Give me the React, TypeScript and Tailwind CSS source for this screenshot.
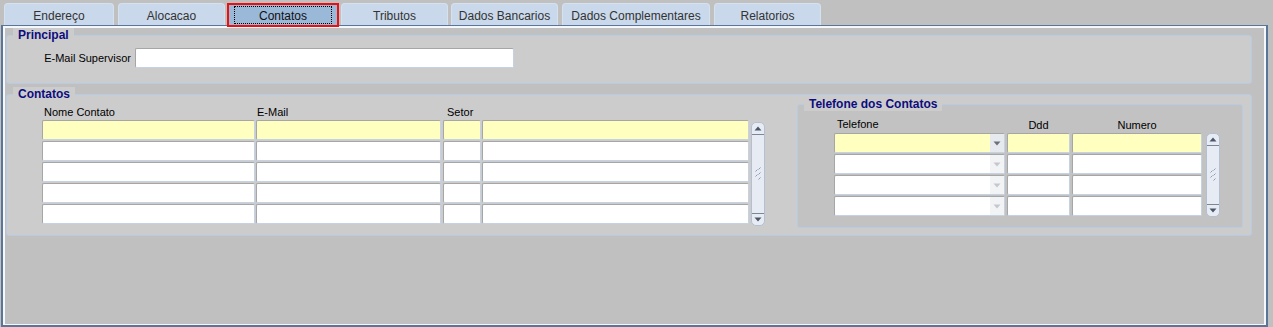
import { ReactNode } from 'react'
import { clsx } from 'clsx'

// ── Tabs ──────────────────────────────────────────────────────────────────────
const TABS = [
  { label: 'Endereço', cls: 'ml-[3px] w-[110px]' },
  { label: 'Alocacao', cls: 'ml-[4px] w-[107px]' },
  { label: 'Contatos', cls: 'ml-[2px] w-[112px]', active: true },
  { label: 'Tributos', cls: 'ml-[2px] w-[107px]' },
  { label: 'Dados Bancarios', cls: 'ml-[3px] w-[107px]' },
  { label: 'Dados Complementares', cls: 'ml-[4px] w-[148px]' },
  { label: 'Relatorios', cls: 'ml-[4px] w-[107px]' },
]

function Tab({ label, cls, active }: { label: string; cls: string; active?: boolean }) {
  if (active)
    return (
      <div className={clsx('relative z-10 h-[24px] border-2 border-[#ee0e0e] bg-[#9ab8d8] px-[5px] py-[1px] flex', cls)}>
        <div className="flex-1 border border-dotted border-black flex items-center justify-center pt-[1px] text-[12px] text-[#111]">
          {label}
        </div>
      </div>
    )
  return (
    <div className={clsx('h-[22px] rounded-t-[4px] border border-b-0 border-[#d6e1ee] bg-[#c9d8ea] flex items-center justify-center pt-[3px] text-[12px] text-[#333]', cls)}>
      {label}
    </div>
  )
}

// ── Group box ─────────────────────────────────────────────────────────────────
function GroupBox({ title, className, children }: { title: string; className?: string; children: ReactNode }) {
  return (
    <div className={clsx('relative rounded-[3px] border border-[#b7cce4]', className)}>
      <span className="absolute -top-[8px] left-[6px] h-[14px] px-[5px] bg-[#cccccc] text-[12px] leading-[14px] font-bold text-[#0c0c7e]">
        {title}
      </span>
      {children}
    </div>
  )
}

// ── Inputs ────────────────────────────────────────────────────────────────────
function Field({ cls, yellow, children }: { cls: string; yellow?: boolean; children?: ReactNode }) {
  return (
    <div
      className={clsx(
        'h-[20px] rounded-[2px] border border-[#a6a6a6] border-r-[#c4d2e4] border-b-[#c4d2e4] flex justify-end overflow-hidden',
        yellow ? 'bg-[#ffffc0]' : 'bg-white',
        cls
      )}
    >
      {children}
    </div>
  )
}

function DropArrow({ enabled }: { enabled: boolean }) {
  return (
    <div className={clsx('w-[14px] h-full flex items-center justify-center', enabled ? 'bg-[#e6e9ee]' : 'bg-[#f2f3f5]')}>
      <svg width="8" height="5" viewBox="0 0 8 5">
        <path d="M0.5 0.5h7L4 4.5z" fill={enabled ? '#6b717c' : '#c4c8ce'} />
      </svg>
    </div>
  )
}

function ScrollBar({ cls }: { cls: string }) {
  return (
    <div className={clsx('w-[14px] rounded-[5px] border border-[#b4c0d0] bg-[#e7ecf4] flex flex-col', cls)}>
      <div className="h-[12px] border-b border-[#7d8696] flex items-center justify-center">
        <svg width="8" height="5" viewBox="0 0 8 5">
          <path d="M0.5 4.5h7L4 0.5z" fill="#4d5669" />
        </svg>
      </div>
      <div className="flex-1 flex items-center justify-center">
        <svg width="6" height="14" viewBox="0 0 6 14">
          <path d="M0.5 4.5l2-2M3.5 2.5l2-2M0.5 9.5l2-2M3.5 7.5l2-2M3.5 12.5l2-2" stroke="#8e9bb0" strokeWidth="1" />
        </svg>
      </div>
      <div className="h-[12px] border-t border-[#7d8696] flex items-center justify-center">
        <svg width="8" height="5" viewBox="0 0 8 5">
          <path d="M0.5 0.5h7L4 4.5z" fill="#4d5669" />
        </svg>
      </div>
    </div>
  )
}

// ── Tables ────────────────────────────────────────────────────────────────────
const CONTACT_COLS = ['w-[213px]', 'ml-[1px] w-[185px]', 'ml-[2px] w-[38px]', 'ml-[1px] w-[267px]']

function ContactsTable() {
  return (
    <div className="pl-[35px] pt-[11px] flex">
      <div className="flex flex-col">
        <div className="flex h-[13px] mb-[1px] text-[11px] leading-[13px] text-black">
          <span className="w-[213px] pl-[2px]">Nome Contato</span>
          <span className="ml-[1px] w-[185px] pl-[1px]">E-Mail</span>
          <span className="ml-[2px] w-[38px] pl-[4px]">Setor</span>
        </div>
        <div className="flex flex-col gap-[1px]">
          {[0, 1, 2, 3, 4].map(r => (
            <div key={r} className="flex">
              {CONTACT_COLS.map((c, i) => <Field key={i} cls={c} yellow={r === 0} />)}
            </div>
          ))}
        </div>
      </div>
      <ScrollBar cls="ml-[2px] mt-[16px] h-[104px]" />
    </div>
  )
}

function PhonesBox() {
  return (
    <GroupBox title="Telefone dos Contatos" className="mt-[9px] mr-[8px] w-[446px] h-[124px] bg-[#c2c2c2]">
      <div className="pl-[36px] pt-[14px] flex">
        <div className="flex flex-col">
          <div className="flex h-[13px] mb-[1px] text-[11px] leading-[13px] text-black">
            <span className="w-[171px] pl-[3px] -mt-[1px]">Telefone</span>
            <span className="ml-[2px] w-[63px] text-center">Ddd</span>
            <span className="ml-[2px] w-[130px] text-center">Numero</span>
          </div>
          <div className="flex flex-col gap-[1px]">
            {[0, 1, 2, 3].map(r => (
              <div key={r} className="flex">
                <Field cls="w-[171px]" yellow={r === 0}>
                  <DropArrow enabled={r === 0} />
                </Field>
                <Field cls="ml-[2px] w-[63px]" yellow={r === 0} />
                <Field cls="ml-[2px] w-[130px]" yellow={r === 0} />
              </div>
            ))}
          </div>
        </div>
        <ScrollBar cls="ml-[4px] mt-[14px] h-[84px]" />
      </div>
    </GroupBox>
  )
}

// ── Page ──────────────────────────────────────────────────────────────────────
export default function App() {
  return (
    <div className="w-[1273px] h-[327px] bg-[#c0c0c0] pl-[1px] font-['Liberation_Sans',Arial,sans-serif] overflow-hidden">
      <div className="h-[25px] pt-[3px] flex items-start">
        {TABS.map(t => <Tab key={t.label} {...t} />)}
      </div>
      <div className="w-[1267px] h-[302px] border-l-2 border-r-2 border-b-2 border-t border-[#5b7598]">
        <div className="h-full border-l-2 border-r-2 border-t-2 border-b border-[#f4f7fb] bg-[#c0c0c0]">
          <GroupBox title="Principal" className="mt-[7px] ml-[1px] w-[1246px] h-[49px] bg-[#cccccc]">
            <div className="pt-[12px] flex items-center">
              <span className="w-[128px] pr-[4px] text-right text-[11px] text-black">E-Mail Supervisor</span>
              <Field cls="w-[379px]" />
            </div>
          </GroupBox>
          <GroupBox title="Contatos" className="mt-[10px] ml-[1px] w-[1246px] h-[142px] bg-[#cccccc] flex justify-between items-start">
            <ContactsTable />
            <PhonesBox />
          </GroupBox>
        </div>
      </div>
    </div>
  )
}
